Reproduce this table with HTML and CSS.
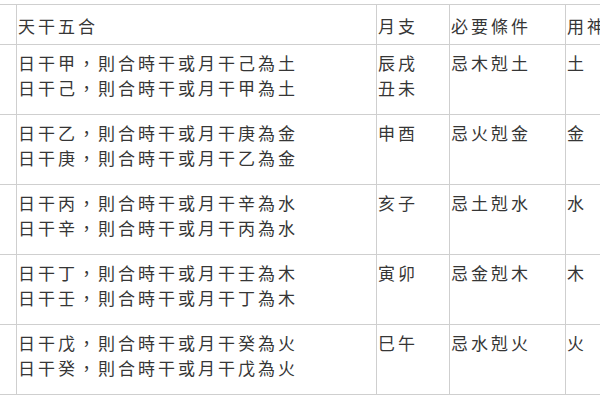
FILE: index.html
```html
<!DOCTYPE html>
<html lang="zh-Hant">
<head>
<meta charset="utf-8">
<title>天干五合</title>
<link rel="stylesheet" href="styles.css">
</head>
<body>
<table class="grid">
  <colgroup>
    <col class="c0"><col class="c1"><col class="c2"><col class="c3"><col class="c4">
  </colgroup>
  <tr class="head">
    <td></td><td>天干五合</td><td>月支</td><td>必要條件</td><td>用神</td>
  </tr>
  <tr class="row">
    <td></td>
    <td>日干甲，則合時干或月干己為土<br>日干己，則合時干或月干甲為土</td>
    <td>辰戌<br>丑未</td><td>忌木剋土</td><td>土</td>
  </tr>
  <tr class="row">
    <td></td>
    <td>日干乙，則合時干或月干庚為金<br>日干庚，則合時干或月干乙為金</td>
    <td>申酉</td><td>忌火剋金</td><td>金</td>
  </tr>
  <tr class="row">
    <td></td>
    <td>日干丙，則合時干或月干辛為水<br>日干辛，則合時干或月干丙為水</td>
    <td>亥子</td><td>忌土剋水</td><td>水</td>
  </tr>
  <tr class="row">
    <td></td>
    <td>日干丁，則合時干或月干壬為木<br>日干壬，則合時干或月干丁為木</td>
    <td>寅卯</td><td>忌金剋木</td><td>木</td>
  </tr>
  <tr class="row">
    <td></td>
    <td>日干戊，則合時干或月干癸為火<br>日干癸，則合時干或月干戊為火</td>
    <td>巳午</td><td>忌水剋火</td><td>火</td>
  </tr>
</table>
</body>
</html>
```

FILE: styles.css
```css
html, body {
  margin: 0;
  padding: 0;
  background: #ffffff;
  overflow: hidden;
}
body {
  width: 600px;
  height: 400px;
  font-family: "Noto Sans CJK TC", "Noto Sans CJK SC", sans-serif;
  color: #363636;
}
.grid {
  border-collapse: collapse;
  table-layout: fixed;
  width: 700px;
  margin: 4px 0 0 -20px;
  font-size: 17px;
  letter-spacing: 3px;
  line-height: 25px;
}
.c0 { width: 36px; }
.c1 { width: 360px; }
.c2 { width: 73px; }
.c3 { width: 116px; }
.c4 { width: 115px; }
.grid td {
  border: 1px solid #cfcfcf;
  padding: 0 0 0 1px;
  white-space: nowrap;
  overflow: hidden;
}
.head td {
  height: 38px;
  vertical-align: middle;
  padding-top: 1px;
}
.row td {
  height: 64px;
  vertical-align: top;
  padding-top: 5px;
}
```
